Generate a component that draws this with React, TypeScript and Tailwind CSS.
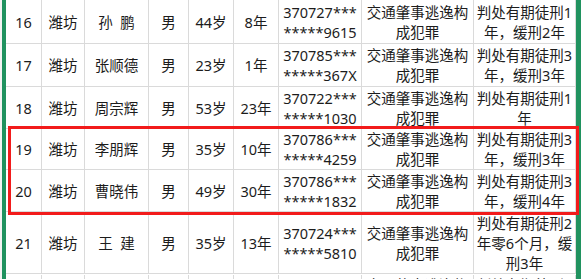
import React from "react";

interface Row {
    no: string;
    city: string;
    name: string;
    sex: string;
    age: string;
    term: string;
    id: string[];
    crime: string[];
    sentence: string[];
    height: string;
}

const rows: Row[] = [
    { no: "16", city: "潍坊", name: "孙  鹏", sex: "男", age: "44岁", term: "8年", id: ["370727***", "*****9615"], crime: ["交通肇事逃逸构", "成犯罪"], sentence: ["判处有期徒刑1", "年，缓刑2年"], height: "h-[44px]" },
    { no: "17", city: "潍坊", name: "张顺德", sex: "男", age: "23岁", term: "1年", id: ["370785***", "*****367X"], crime: ["交通肇事逃逸构", "成犯罪"], sentence: ["判处有期徒刑3", "年，缓刑3年"], height: "h-[43px]" },
    { no: "18", city: "潍坊", name: "周宗辉", sex: "男", age: "53岁", term: "23年", id: ["370722***", "*****1030"], crime: ["交通肇事逃逸构", "成犯罪"], sentence: ["判处有期徒刑1", "年"], height: "h-[42px]" },
    { no: "19", city: "潍坊", name: "李朋辉", sex: "男", age: "35岁", term: "10年", id: ["370786***", "*****4259"], crime: ["交通肇事逃逸构", "成犯罪"], sentence: ["判处有期徒刑3", "年，缓刑3年"], height: "h-[41px]" },
    { no: "20", city: "潍坊", name: "曹晓伟", sex: "男", age: "49岁", term: "30年", id: ["370786***", "*****1832"], crime: ["交通肇事逃逸构", "成犯罪"], sentence: ["判处有期徒刑3", "年，缓刑4年"], height: "h-[42px]" },
    { no: "21", city: "潍坊", name: "王  建", sex: "男", age: "35岁", term: "13年", id: ["370724***", "*****5810"], crime: ["交通肇事逃逸构", "成犯罪"], sentence: ["判处有期徒刑2", "年零6个月，缓", "刑3年"], height: "h-[62px]" },
];

function Cell({ w, lines }: { w: string; lines: string[] }) {
    return (
        <div className={`${w} h-full shrink-0 flex flex-col items-center justify-center text-center border-r border-b border-[#dadada] whitespace-pre`}>
            {lines.map((l, i) => (
                <div key={i}>{l}</div>
            ))}
        </div>
    );
}

function TableRow({ r }: { r: Row }) {
    return (
        <div className={`flex ${r.height} shrink-0`}>
            <Cell w="w-[36px]" lines={[r.no]} />
            <Cell w="w-[43px]" lines={[r.city]} />
            <Cell w="w-[64px]" lines={[r.name]} />
            <Cell w="w-[40px]" lines={[r.sex]} />
            <Cell w="w-[45px]" lines={[r.age]} />
            <Cell w="w-[45px]" lines={[r.term]} />
            <Cell w="w-[83px]" lines={r.id} />
            <Cell w="w-[112px]" lines={r.crime} />
            <Cell w="w-[102px]" lines={r.sentence} />
        </div>
    );
}

export default function App() {
    return (
        <div
            className="relative w-[581px] h-[279px] overflow-hidden bg-white flex text-[14.5px] leading-[20px] text-[#1c1c1c]"
            style={{ fontFamily: '"Noto Sans", "Noto Sans CJK SC", sans-serif' }}
        >
            <div className="w-[2px] shrink-0 bg-[#f3f3f3]" />
            <div className="w-[4px] shrink-0 bg-[#20925f]" />

            <div className="w-[570px] shrink-0 flex flex-col">
                {rows.map((r) => (
                    <TableRow key={r.no} r={r} />
                ))}
                {/* next row, cut off by the window */}
                <div className="flex h-[62px] shrink-0 pt-[1px]">
                    <Cell w="w-[36px]" lines={[]} />
                    <Cell w="w-[43px]" lines={[]} />
                    <Cell w="w-[64px]" lines={[]} />
                    <Cell w="w-[40px]" lines={[]} />
                    <Cell w="w-[45px]" lines={[]} />
                    <Cell w="w-[45px]" lines={[]} />
                    <Cell w="w-[83px]" lines={["370683***", "*****2216", " "]} />
                    <Cell w="w-[112px]" lines={["交通肇事逃逸构", "成犯罪", " "]} />
                    <Cell w="w-[102px]" lines={["判处有期徒刑2", "年零6个月，缓", "刑3年"]} />
                </div>
            </div>

            <div className="w-[5px] shrink-0 bg-[#20925f]" />

            {/* red highlight around rows 19-20 */}
            <div className="absolute left-[8px] top-[126px] w-[571px] h-[89px] border-[3px] border-[#f21b1b]" />
        </div>
    );
}
